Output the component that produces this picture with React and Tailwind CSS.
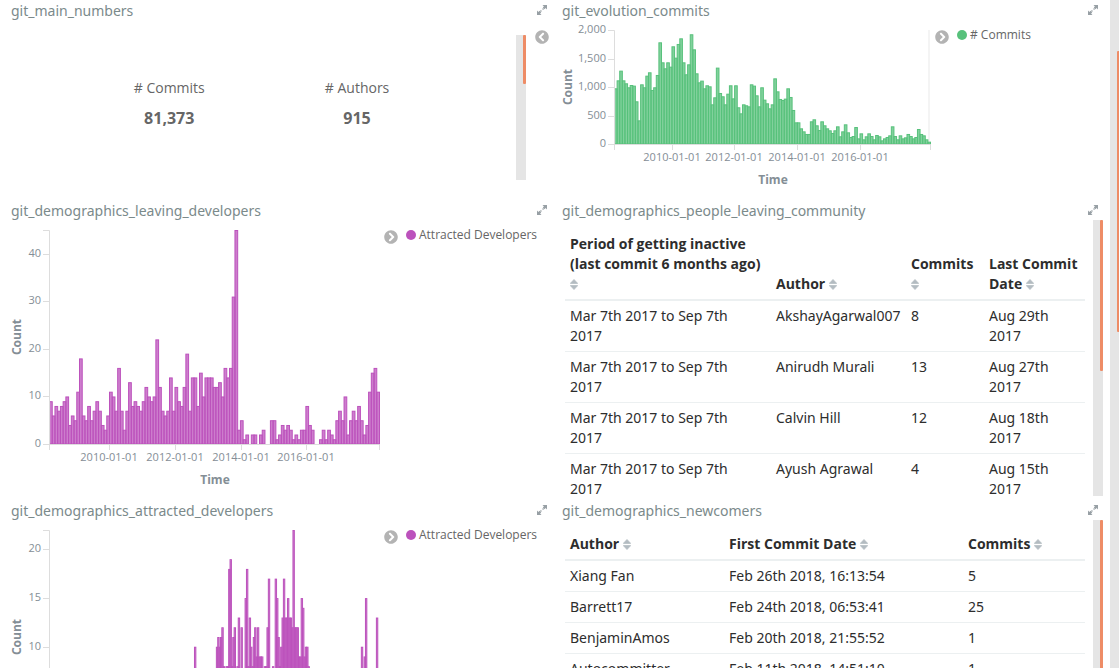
import React from "react";
import { FaChevronCircleLeft, FaChevronCircleRight } from "react-icons/fa";

const COMMITS = [
  977, 1117, 1287, 1117, 1065, 995, 1035, 1024, 749, 415, 1047, 995, 1199, 1258, 948, 995, 1211, 1784, 1433, 1328,
  1433, 1357, 1714, 1515, 1755, 1854, 1433, 1223, 1398, 1925, 1661, 1240, 1082, 1112, 977, 1030, 1012, 696, 819, 1340,
  895, 837, 696, 883, 1030, 801, 1030, 644, 538, 696, 679, 661, 1047, 1024, 854, 661, 995, 778, 714, 626,
  696, 1152, 924, 790, 772, 796, 977, 825, 597, 380, 380, 275, 222, 176, 176, 398, 433, 328, 246, 398,
  328, 275, 240, 193, 240, 310, 135, 222, 345, 205, 123, 140, 298, 99, 187, 82, 135, 187, 140, 82,
  158, 135, 64, 99, 123, 152, 310, 140, 82, 152, 99, 117, 176, 140, 99, 123, 263, 176, 152, 82, 41,
];

const LEAVING = [
  9, 6, 8, 7, 8, 9, 10, 4, 6, 5, 11, 18, 6, 5, 8, 5, 7, 9, 7, 4, 3, 6, 11, 10, 7, 16, 7, 3, 7, 13,
  8, 9, 8, 7, 9, 12, 10, 9, 10, 22, 12, 7, 6, 7, 14, 7, 12, 9, 8, 12, 19, 7, 14, 14, 8, 15, 10, 14, 14, 14,
  12, 12, 13, 10, 16, 14, 16, 31, 45, 3, 5, 1, 2, 0, 2, 2, 0, 2, 3, 0, 0, 5, 5, 1, 2, 4, 3, 4, 3, 1,
  2, 1, 3, 3, 8, 4, 3, 0, 0, 1, 3, 1, 3, 2, 1, 5, 7, 5, 10, 2, 5, 7, 5, 8, 5, 2, 4, 11, 15, 16, 11,
];

// Half-month buckets; runs of [first bucket, counts]
const ATTRACTED_RUNS = [
  [106, [10]],
  [122, [10, 11, 10, 11, 12, 8, 7, 8, 8, 18, 19, 8, 11, 12, 7, 8, 13, 7, 12, 6, 6, 15, 18, 8, 13, 10, 8, 11, 12, 9, 12, 9, 9, 9, 7, 8, 8, 12, 17, 7]],
  [163, [8, 5, 17, 15, 11, 8, 10, 13, 17, 13, 13, 15, 13, 13, 12, 22, 12, 12, 12, 9, 9, 15, 14, 9, 10, 10, 8]],
  [228, [10, 6, 9, 15]],
  [239, [13]],
];
const ATTRACTED = Array(242).fill(0);
ATTRACTED_RUNS.forEach(([start, counts]) => counts.forEach((n, i) => (ATTRACTED[start + i] = n)));

function Histogram({ label, data, max, ticks, dates, left, right, bottom, height, color, endZone }) {
  const top = 10;
  const step = (right - left) / data.length;
  const unit = (bottom - top) / max;
  const middle = (top + bottom) / 2;
  return (
    <svg width="380" height={height} role="img" aria-label={label} className="block shrink-0 font-['Open_Sans',sans-serif]">
      {endZone && <rect x={right - 2} y={top} width="2" height={bottom - top} fill="#f4f4f4" />}
      <g fill={color} fillOpacity="0.75" stroke={color} strokeWidth="1">
        {data.map((n, i) =>
          n ? <rect key={i} x={left + 0.5 + i * step} y={bottom - n * unit + 0.5} width={step} height={n * unit - 0.5} /> : null
        )}
      </g>
      <g fill="none" stroke="#dddddd">
        <path d={`M${left - 6} ${top + 0.5}H${left + 0.5}V${bottom + 0.5}H${left - 6}`} />
        <path d={`M${left + 0.5} ${bottom + 6}V${bottom + 0.5}H${right + 0.5}V${bottom + 6}`} />
        {ticks.map((t) => (
          <path key={t} d={`M${left - 6} ${Math.round(bottom - t * unit) + 0.5}H${left}`} />
        ))}
        {dates.map(([x]) => (
          <path key={x} d={`M${x + 0.5} ${bottom}v6`} />
        ))}
      </g>
      <g fill="#848e96" fontSize="11">
        {ticks.map((t) => (
          <text key={t} x={left - 8} y={Math.round(bottom - t * unit) + 3} textAnchor="end">
            {t.toLocaleString("en-US")}
          </text>
        ))}
        {dates.map(([x, d]) => (
          <text key={d} x={x} y={bottom + 17} textAnchor="middle">
            {d}
          </text>
        ))}
      </g>
      <g fill="#848e96" fontSize="12" fontWeight="700" textAnchor="middle">
        <text transform={`translate(17 ${middle}) rotate(-90)`}>Count</text>
        <text x={(left + right) / 2 + 1} y={bottom + 40}>
          Time
        </text>
      </g>
    </svg>
  );
}

function LegendToggle({ open }) {
  const Icon = open ? FaChevronCircleRight : FaChevronCircleLeft;
  return (
    <button type="button" aria-label={open ? "Hide legend" : "Show legend"} className="mt-[10px] size-[14px] shrink-0 text-[#b3b3b3]">
      <Icon className="size-[14px]" />
    </button>
  );
}

function ChartBody({ legend, ...chart }) {
  return (
    <div className="flex items-start">
      <Histogram {...chart} />
      <LegendToggle open />
      <div className="ml-2 mt-[5px] flex items-center gap-[3px] text-xs leading-5 text-[#666666]">
        <svg width="10" height="10" aria-hidden="true">
          <circle cx="5" cy="5" r="5" fill={chart.color} />
        </svg>
        <span className="whitespace-nowrap">{legend}</span>
      </div>
    </div>
  );
}

function ScrollTrack({ className = "", thumb }) {
  return (
    <div className={`flex w-[10px] shrink-0 justify-end bg-[#e5e5e5] ${className}`}>
      <div className={`w-[3px] rounded-[1px] bg-[#ee8c66] ${thumb}`} />
    </div>
  );
}

function Panel({ title, className, children }) {
  return (
    <section className={`flex min-w-0 flex-col overflow-hidden pb-1 ${className}`}>
      <header className="flex h-5 shrink-0 items-start justify-between pl-[7px] pr-2">
        <h2 className="font-['Noto_Sans','Open_Sans',sans-serif] text-sm leading-[22px] text-[#7b8a8b]">{title}</h2>
        <button type="button" aria-label={`Expand ${title}`} className="mt-[5px] text-[#98a0a5]">
          <svg width="10" height="10" viewBox="0 0 10 10" aria-hidden="true">
            <path d="M5.5 0H10V4.5L8.6 3.1L7.5 4.2L5.8 2.5L6.9 1.4zM4.5 10H0V5.5L1.4 6.9L2.5 5.8L4.2 7.5L3.1 8.6z" fill="currentColor" />
            <path d="M5.6 4.4l.9-.9M3.5 6.5l.9-.9" stroke="currentColor" strokeWidth="1.4" />
          </svg>
        </button>
      </header>
      <div className="min-h-0 grow">{children}</div>
    </section>
  );
}

function SortIcon() {
  return (
    <svg width="8" height="11" viewBox="0 0 8 11" className="inline align-[-1px]" aria-hidden="true">
      <path d="M.3 4.4L4 .5L7.7 4.4zM.3 6.6H7.7L4 10.5z" fill="#b4bcc2" stroke="#b4bcc2" strokeWidth=".8" strokeLinejoin="round" />
    </svg>
  );
}

function DataTable({ columns, rows, thumb }) {
  return (
    <div className="flex h-full items-start justify-between pl-[10px] pr-[3px]">
      <div className="h-full grow overflow-hidden pr-2">
        <table className="mt-[9px] w-full table-fixed border-separate border-spacing-0 text-left text-sm leading-5 text-[#2d2d2d]">
          <thead>
            <tr>
              {columns.map(([name, width]) => (
                <th key={name} scope="col" className={`border-b-2 border-[#ecf0f1] px-[5px] py-[5px] align-bottom font-bold ${width}`}>
                  <button type="button" className="block w-full text-left">
                    {name} <SortIcon />
                  </button>
                </th>
              ))}
            </tr>
          </thead>
          <tbody className="font-['Noto_Sans','Open_Sans',sans-serif]">
            {rows.map((row) => (
              <tr key={row.join()}>
                {row.map((cell, i) => (
                  <td key={i} className="border-b border-[#ecf0f1] py-[5px] pl-[5px] pr-3 align-top">
                    {cell}
                  </td>
                ))}
              </tr>
            ))}
          </tbody>
        </table>
      </div>
      <ScrollTrack className="h-full" thumb={thumb} />
    </div>
  );
}

function Metric({ label, value }) {
  return (
    <div className="text-center text-[#666666]">
      <div className="text-sm leading-5">{label}</div>
      <div className="mt-2 text-base font-bold leading-6">{value}</div>
    </div>
  );
}

const PERIOD = "Mar 7th 2017 to Sep 7th 2017";
const DEV_DATES = [[105, "2010-01-01"], [171, "2012-01-01"], [237, "2014-01-01"], [302, "2016-01-01"]];

export default function App() {
  return (
    <div className="flex h-screen overflow-hidden bg-white font-['Open_Sans',sans-serif]">
      <main className="grid min-w-0 grow auto-rows-max grid-cols-2 content-start px-1">
        <Panel title="git_main_numbers" className="h-[200px]">
          <div className="flex h-full items-start pr-[6px]">
            <div className="flex grow justify-center gap-[120px] pl-[3px] pt-[58px]">
              <Metric label="# Commits" value="81,373" />
              <Metric label="# Authors" value="915" />
            </div>
            <ScrollTrack className="mr-[9px] mt-[15px] h-[145px]" thumb="h-[49px]" />
            <LegendToggle open={false} />
          </div>
        </Panel>

        <Panel title="git_evolution_commits" className="h-[200px]">
          <ChartBody
            label="Commits over time"
            legend="# Commits"
            data={COMMITS}
            max={2000}
            ticks={[0, 500, 1000, 1500, 2000]}
            dates={[[117, "2010-01-01"], [179, "2012-01-01"], [242, "2014-01-01"], [305, "2016-01-01"]]}
            left={59}
            right={375}
            bottom={124}
            height={176}
            color="#57c17b"
            endZone
          />
        </Panel>

        <Panel title="git_demographics_leaving_developers" className="h-[300px]">
          <ChartBody
            label="Leaving developers over time"
            legend="Attracted Developers"
            data={LEAVING}
            max={45}
            ticks={[0, 10, 20, 30, 40]}
            dates={DEV_DATES}
            left={45}
            right={375}
            bottom={224}
            height={276}
            color="#bc52bc"
          />
        </Panel>

        <Panel title="git_demographics_people_leaving_community" className="h-[300px]">
          <DataTable
            thumb="h-[151px]"
            columns={[
              ["Period of getting inactive (last commit 6 months ago)", "w-[206px]"],
              ["Author", "w-[135px]"],
              ["Commits", "w-[78px]"],
              ["Last Commit Date", "w-auto"],
            ]}
            rows={[
              [PERIOD, "AkshayAgarwal007", "8", "Aug 29th 2017"],
              [PERIOD, "Anirudh Murali", "13", "Aug 27th 2017"],
              [PERIOD, "Calvin Hill", "12", "Aug 18th 2017"],
              [PERIOD, "Ayush Agrawal", "4", "Aug 15th 2017"],
            ]}
          />
        </Panel>

        <Panel title="git_demographics_attracted_developers" className="h-[300px]">
          <ChartBody
            label="Attracted developers over time"
            legend="Attracted Developers"
            data={ATTRACTED}
            max={22}
            ticks={[0, 5, 10, 15, 20]}
            dates={DEV_DATES}
            left={45}
            right={376}
            bottom={224}
            height={276}
            color="#bc52bc"
          />
        </Panel>

        <Panel title="git_demographics_newcomers" className="h-[300px]">
          <DataTable
            thumb="h-[200px]"
            columns={[
              ["Author", "w-[159px]"],
              ["First Commit Date", "w-[239px]"],
              ["Commits", "w-auto"],
            ]}
            rows={[
              ["Xiang Fan", "Feb 26th 2018, 16:13:54", "5"],
              ["Barrett17", "Feb 24th 2018, 06:53:41", "25"],
              ["BenjaminAmos", "Feb 20th 2018, 21:55:52", "1"],
              ["Autocommitter", "Feb 11th 2018, 14:51:10", "1"],
            ]}
          />
        </Panel>
      </main>
      <div className="flex w-[9px] shrink-0 justify-end bg-[#e5e5e5] pt-[51px]">
        <div className="h-[281px] w-[2px] rounded-l-[1px] bg-[#ee8c66]" />
      </div>
    </div>
  );
}
